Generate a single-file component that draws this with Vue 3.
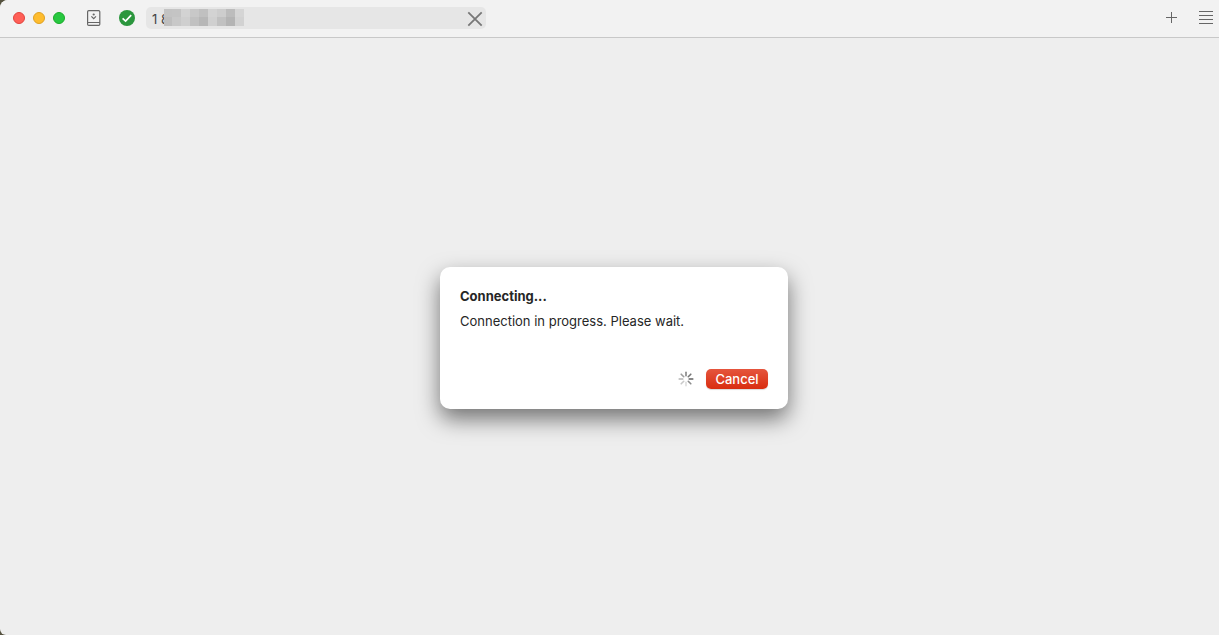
<script setup>
import { ref } from 'vue'

const host = ref('1 8')

const lights = [
  { name: 'Close', tone: 'red' },
  { name: 'Minimize', tone: 'amber' },
  { name: 'Zoom', tone: 'green' }
]

const mosaic = [
  '#c3c3c3', '#c4c4c4', '#d3d3d3', '#c8c8c8', '#c0c0c0', '#d3d3d3', '#cdcdcd', '#bcbcbc', '#d5d5d5',
  '#bebebe', '#c8c8c8', '#cfcfcf', '#c1c1c1', '#b7b7b7', '#d0d0d0', '#c1c1c1', '#b4b4b4', '#d2d2d2'
]

const spokes = [
  { angle: 0, color: '#858585' },
  { angle: 45, color: '#777777' },
  { angle: 90, color: '#606060' },
  { angle: 135, color: '#8c8c8c' },
  { angle: 180, color: '#dddddd' },
  { angle: 225, color: '#c9c9c9' },
  { angle: 270, color: '#b5b5b5' },
  { angle: 315, color: '#9d9d9d' }
]
</script>

<template>
  <div class="window">
    <header class="toolbar">
      <div class="lights">
        <button v-for="l in lights" :key="l.name" type="button" class="light" :class="l.tone" :aria-label="l.name"></button>
      </div>
      <button type="button" class="icon book" aria-label="Address book">
        <svg width="14" height="16" viewBox="0 0 14 16" fill="none" stroke="#666">
          <rect x="0.6" y="0.6" width="12.2" height="14.8" rx="1.2" stroke-width="1.2" />
          <path d="M1 12.5H13" />
          <path d="M4.4 6.4L6.7 8.7L9 6.4" stroke-width="1.2" />
          <circle cx="6.7" cy="4.5" r="1.1" fill="#666" stroke="none" />
        </svg>
      </button>
      <svg class="status" width="16" height="16" viewBox="0 0 16 16" role="img" aria-label="Ready">
        <circle cx="8" cy="8" r="8" fill="#2b963d" />
        <path d="M3.6 8.3L6.6 11.1L12.2 5.1" fill="none" stroke="#fff" stroke-width="1.7" />
      </svg>
      <div class="address">
        <input v-model="host" type="text" aria-label="Address" spellcheck="false" />
        <div class="mosaic" aria-hidden="true">
          <i v-for="(c, n) in mosaic" :key="n" :style="{ background: c }"></i>
        </div>
        <button type="button" class="icon clear" aria-label="Stop">
          <svg width="16" height="16" viewBox="0 0 16 16" stroke="#777" stroke-width="1.8">
            <path d="M1.3 1.3L14.7 14.7M14.7 1.3L1.3 14.7" />
          </svg>
        </button>
      </div>
      <div class="actions">
        <button type="button" class="icon" aria-label="New tab">
          <svg width="11" height="11" viewBox="0 0 11 11" stroke="#666">
            <path d="M5.5 0V11M0 5.5H11" />
          </svg>
        </button>
        <button type="button" class="icon" aria-label="Menu">
          <svg width="14" height="13" viewBox="0 0 14 13" stroke="#666">
            <path d="M0 0.5H14M0 4.5H14M0 8.5H14M0 12.5H14" />
          </svg>
        </button>
      </div>
    </header>

    <main class="content">
      <section class="dialog" role="dialog" aria-labelledby="dialog-title" aria-describedby="dialog-text">
        <h1 id="dialog-title">Connecting...</h1>
        <p id="dialog-text">Connection in progress. Please wait.</p>
        <div class="footer">
          <svg width="16" height="16" viewBox="0 0 16 16" role="img" aria-label="Loading">
            <path
              v-for="s in spokes"
              :key="s.angle"
              d="M8 1.2V4.8"
              :stroke="s.color"
              stroke-width="1.6"
              stroke-linecap="round"
              :transform="`rotate(${s.angle} 8 8)`"
            />
          </svg>
          <button type="button" class="cancel">Cancel</button>
        </div>
      </section>
    </main>
  </div>
</template>

<style>
body {
  background: #55523f;
}
</style>

<style scoped>
.window {
  display: flex;
  flex-direction: column;
  min-height: 100vh;
  overflow: hidden;
  border-radius: 8px 0 0 6px;
  background: #eeeeee;
  color: #262626;
  font-family: Inter, "Liberation Sans", sans-serif;
  font-size: 13px;
}
button {
  padding: 0;
  border: 0;
  font: inherit;
}
.toolbar {
  display: flex;
  align-items: center;
  box-sizing: border-box;
  height: 38px;
  padding: 0 6px 2px 13px;
  border-bottom: 1px solid #c8c8c8;
  background: #f2f2f2;
}
.lights {
  display: flex;
  gap: 8px;
}
.light {
  box-sizing: border-box;
  width: 12px;
  height: 12px;
  border: 1px solid;
  border-radius: 50%;
}
.red {
  background: #ff5f57;
  border-color: #e0443e;
}
.amber {
  background: #febc2e;
  border-color: #dea123;
}
.green {
  background: #28c840;
  border-color: #1aab29;
}
.icon {
  display: flex;
  background: none;
}
.book {
  margin-left: 22px;
}
.status {
  margin-left: 18px;
}
.address {
  position: relative;
  display: flex;
  align-items: center;
  box-sizing: border-box;
  flex: 0 1 340px;
  height: 22px;
  margin-left: 11px;
  padding: 2px 3px 0 6px;
  border-radius: 5px;
  background: #e6e6e6;
}
.address input {
  flex: 1;
  min-width: 0;
  padding: 0;
  border: 0;
  outline: 0;
  background: none;
  color: #444;
  font: inherit;
}
.mosaic {
  position: absolute;
  top: 2px;
  left: 18px;
  display: grid;
  grid-template-columns: 8px repeat(8, 9px);
  grid-template-rows: 8px 9px;
}
.actions {
  display: flex;
  align-items: center;
  gap: 22px;
  margin-left: auto;
}
.content {
  display: grid;
  flex: 1;
  place-items: center;
  padding: 2px 0 0 9px;
}
.dialog {
  box-sizing: border-box;
  width: 348px;
  max-width: 100%;
  padding: 19px 20px 20px;
  border-radius: 10px;
  background: #fff;
  box-shadow: 0 10px 22px rgba(0, 0, 0, 0.52);
}
h1,
p {
  margin: 0;
  font-size: 13px;
  line-height: 20px;
}
h1 {
  font-weight: 700;
}
p {
  margin-top: 5px;
}
.footer {
  display: flex;
  align-items: center;
  justify-content: flex-end;
  gap: 12px;
  margin-top: 38px;
}
.cancel {
  width: 62px;
  height: 20px;
  border-radius: 5px;
  background: linear-gradient(#e5553d, #d92d10);
  box-shadow: 0 1px 1px rgba(0, 0, 0, 0.15);
  color: #fff;
  font-weight: 500;
  line-height: 18px;
}
</style>
